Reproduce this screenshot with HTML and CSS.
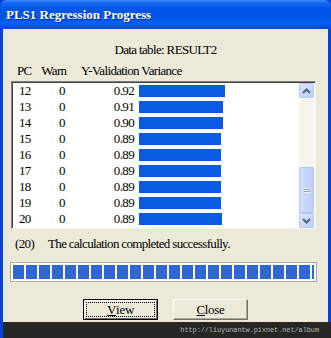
FILE: index.html
```html
<!DOCTYPE html>
<html lang="en">
<head>
<meta charset="UTF-8">
<title>PLS1 Regression Progress</title>
<link rel="stylesheet" href="styles.css">
</head>
<body>

<div class="window">
    <div class="titlebar">PLS1 Regression Progress</div>

    <div class="content">
        <div class="datatable">Data table: RESULT2</div>

        <div class="colhead">
            <span class="h-pc">PC</span>
            <span class="h-warn">Warn</span>
            <span class="h-var">Y-Validation Variance</span>
        </div>

        <div class="listbox">
            <div class="rows">
                <div class="row"><span class="pc">12</span><span class="warn">0</span><span class="val">0.92</span><span class="bar" style="width:86px"></span></div>
                <div class="row"><span class="pc">13</span><span class="warn">0</span><span class="val">0.91</span><span class="bar" style="width:84px"></span></div>
                <div class="row"><span class="pc">14</span><span class="warn">0</span><span class="val">0.90</span><span class="bar" style="width:84px"></span></div>
                <div class="row"><span class="pc">15</span><span class="warn">0</span><span class="val">0.89</span><span class="bar" style="width:82px"></span></div>
                <div class="row"><span class="pc">16</span><span class="warn">0</span><span class="val">0.89</span><span class="bar" style="width:82px"></span></div>
                <div class="row"><span class="pc">17</span><span class="warn">0</span><span class="val">0.89</span><span class="bar" style="width:82px"></span></div>
                <div class="row"><span class="pc">18</span><span class="warn">0</span><span class="val">0.89</span><span class="bar" style="width:82px"></span></div>
                <div class="row"><span class="pc">19</span><span class="warn">0</span><span class="val">0.89</span><span class="bar" style="width:82px"></span></div>
                <div class="row"><span class="pc">20</span><span class="warn">0</span><span class="val">0.89</span><span class="bar" style="width:83px"></span></div>
            </div>
            <div class="scrollbar">
                <div class="sbtn">
                    <svg width="9" height="6" viewBox="0 0 9 6"><path d="M1 5 L4.5 1.5 L8 5" fill="none" stroke="#4d6185" stroke-width="2"/></svg>
                </div>
                <div class="track">
                    <div class="thumb">
                        <div class="grip"></div>
                    </div>
                </div>
                <div class="sbtn">
                    <svg width="9" height="6" viewBox="0 0 9 6"><path d="M1 1 L4.5 4.5 L8 1" fill="none" stroke="#4d6185" stroke-width="2"/></svg>
                </div>
            </div>
        </div>

        <div class="status">
            <span class="count">(20)</span>
            <span>The calculation completed successfully.</span>
        </div>

        <div class="progress">
            <div class="fill"></div>
        </div>

        <div class="buttons">
            <button class="btn default"><span class="focus"><u>V</u>iew</span></button>
            <button class="btn"><span><u>C</u>lose</span></button>
        </div>
    </div>

    <div class="watermark">http://liuyunantw.pixnet.net/album</div>
</div>

</body>
</html>
```

FILE: styles.css
```css
body {
    margin: 0;
    padding: 0;
    background-color: #ece9d8;
    font-family: "Liberation Serif", serif;
    font-size: 13px;
    letter-spacing: -0.65px;
    color: #000;
}
.window {
    width: 331px;
    height: 338px;
    display: flex;
    flex-direction: column;
    background-color: #0842d8;
    overflow: hidden;
}
.titlebar {
    height: 29px;
    box-sizing: border-box;
    padding: 7px 0 0 6px;
    border-radius: 7px 7px 0 0;
    background: linear-gradient(#3d8ffb 0, #1569f4 3px, #0056e6 8px, #0055e5 16px, #0a5ff0 23px, #0049d6 29px);
    color: #fff;
    font-weight: bold;
    font-size: 13px;
    letter-spacing: 0;
    text-shadow: 1px 1px 0 #0a2a88;
}
.content {
    flex: 1;
    margin: 0 3px;
    background-color: #ece9d8;
    display: flex;
    flex-direction: column;
}
.datatable {
    text-align: center;
    line-height: 16px;
    margin-top: 13px;
}
.colhead {
    line-height: 16px;
    margin-top: 5px;
    height: 16px;
}
.h-pc {
    margin-left: 14px;
}
.h-warn {
    margin-left: 7px;
}
.h-var {
    margin-left: 12px;
}
.listbox {
    margin: 2px 0 0 8px;
    width: 305px;
    height: 148px;
    box-sizing: border-box;
    border-top: 1px solid #828282;
    border-left: 1px solid #828282;
    border-right: 1px solid #f4f3ee;
    border-bottom: 1px solid #f4f3ee;
    box-shadow: inset 1px 1px 0 #404040;
    background-color: #fff;
    display: flex;
}
.rows {
    flex: 1;
    padding-top: 1px;
}
.row {
    display: grid;
    grid-template-columns: 30px 40px 54px auto;
    align-items: center;
    height: 16px;
    line-height: 16px;
}
.pc {
    padding-left: 7px;
}
.warn {
    text-align: center;
}
.val {
    text-align: right;
    padding-right: 2px;
}
.bar {
    display: block;
    height: 12px;
    margin-left: 3px;
    background-color: #0a5ae2;
}
.scrollbar {
    width: 15px;
    margin: 1px 1px 0 0;
    display: flex;
    flex-direction: column;
    background-color: #f5f4ef;
}
.sbtn {
    height: 15px;
    box-sizing: border-box;
    border: 1px solid #b6c9f3;
    border-radius: 2px;
    background: linear-gradient(135deg, #dbe5fd, #bccffa);
    display: flex;
    align-items: center;
    justify-content: center;
}
.track {
    flex: 1;
    display: flex;
    flex-direction: column;
    justify-content: flex-end;
}
.thumb {
    height: 46px;
    box-sizing: border-box;
    border: 1px solid #b2c6f2;
    border-radius: 2px;
    background: linear-gradient(to right, #cfdcfc, #bfd0fa);
    display: flex;
    align-items: center;
    justify-content: center;
}
.grip {
    width: 6px;
    height: 5px;
    background: repeating-linear-gradient(#eef3fe 0 1px, #8aa3d8 1px 2px);
}
.status {
    margin-top: 7px;
    line-height: 16px;
    display: flex;
}
.count {
    width: 33px;
    padding-left: 12px;
}
.progress {
    margin: 10px 0 0 7px;
    width: 307px;
    height: 20px;
    box-sizing: border-box;
    border: 1px solid #b0ad9e;
    background-color: #fff;
    padding: 2px;
}
.fill {
    width: 301px;
    height: 100%;
    background: repeating-linear-gradient(to right, #3167d0 0 11px, #fff 11px 13px);
}
.buttons {
    display: flex;
    justify-content: center;
    gap: 15px;
    margin-top: 17px;
}
.btn {
    width: 75px;
    height: 21px;
    padding: 2px;
    font-family: "Liberation Serif", serif;
    font-size: 13px;
    letter-spacing: -0.3px;
    background-color: #ece9d8;
    border: 1px solid;
    border-color: #fff #716f64 #716f64 #fff;
    box-shadow: inset -1px -1px 0 #aca899;
    display: flex;
}
.btn span {
    flex: 1;
    display: flex;
    align-items: center;
    justify-content: center;
}
.btn.default {
    border: 1px solid #000;
    box-shadow: inset 1px 1px 0 #fff, inset -1px -1px 0 #716f64;
}
.btn .focus {
    border: 1px dotted #000;
}
.watermark {
    height: 16px;
    margin-left: 3px;
    background-color: #262623;
    color: #b8b8b8;
    font-family: "Liberation Mono", monospace;
    font-size: 6.8px;
    letter-spacing: 0;
    line-height: 16px;
    text-align: right;
    padding-right: 12px;
}
```
